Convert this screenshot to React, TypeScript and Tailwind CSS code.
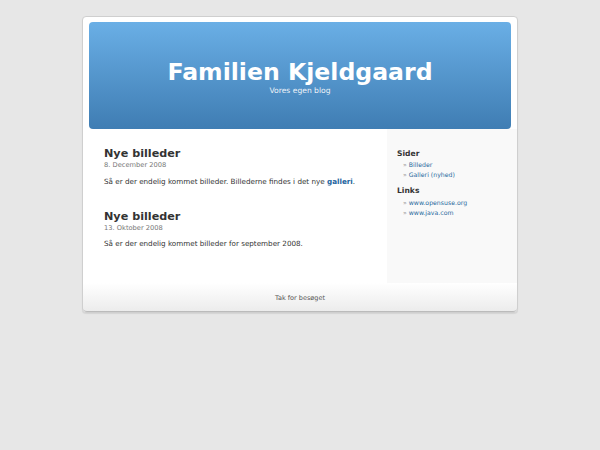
import React from "react";

export default function App() {
  return (
    <div className="min-h-[450px] w-full bg-[#e7e7e7] pt-[16px]" style={{ fontFamily: '"DejaVu Sans", Verdana, sans-serif' }}>
      <div className="mx-auto w-[436px] rounded-[4px] border border-[#cfcfcf] bg-white shadow-[0_1px_1px_rgba(0,0,0,0.08)]">
        <div className="px-[6px] pt-[5px]">
          <div className="flex h-[107px] flex-col items-center justify-center rounded-[4px] bg-gradient-to-b from-[#6aafe6] to-[#3f7db3]">
            <h1 className="mt-[3px] text-[23.6px] font-bold leading-[28px] text-white">Familien Kjeldgaard</h1>
            <div className="text-[7.6px] leading-[10px] text-[#eef3f8]">Vores egen blog</div>
          </div>
        </div>
        <div className="flex">
          <div className="flex-1 pl-[21px] pt-[18px]">
            <div>
              <h2 className="text-[11.2px] font-bold leading-[14px] text-[#333]">Nye billeder</h2>
              <div className="text-[6.7px] leading-[9px] text-[#777]">8. December 2008</div>
              <p className="mt-[7px] text-[7.2px] leading-[10px] text-[#333]">
                Så er der endelig kommet billeder. Billederne findes i det nye <a className="font-bold text-[#21639e]">galleri</a>.
              </p>
            </div>
            <div className="mt-[23px]">
              <h2 className="text-[11.2px] font-bold leading-[14px] text-[#333]">Nye billeder</h2>
              <div className="text-[6.7px] leading-[9px] text-[#777]">13. Oktober 2008</div>
              <p className="mt-[6px] text-[7.2px] leading-[10px] text-[#333]">Så er der endelig kommet billeder for september 2008.</p>
            </div>
          </div>
          <div className="h-[154px] w-[130px] bg-[#f9f9f9] pl-[10px] pt-[20px]">
            <h3 className="text-[7.6px] font-bold leading-[10px] text-[#333]">Sider</h3>
            <ul className="mt-[1px] pl-[6px] text-[6.2px] leading-[10px]">
              <li><span className="text-[#999]">» </span><span className="text-[#2a6a9e]">Billeder</span></li>
              <li><span className="text-[#999]">» </span><span className="text-[#2a6a9e]">Galleri (nyhed)</span></li>
            </ul>
            <h3 className="mt-[6px] text-[7.6px] font-bold leading-[10px] text-[#333]">Links</h3>
            <ul className="mt-[2px] pl-[6px] text-[6.2px] leading-[9.5px]">
              <li><span className="text-[#999]">» </span><span className="text-[#2a6a9e]">www.opensuse.org</span></li>
              <li><span className="text-[#999]">» </span><span className="text-[#2a6a9e]">www.java.com</span></li>
            </ul>
          </div>
        </div>
        <div className="flex h-[29px] items-center justify-center rounded-b-[4px] border-b border-[#bbb] bg-gradient-to-b from-white to-[#ececec] pt-[3px] text-[6.5px] text-[#555]">
          Tak for besøget
        </div>
      </div>
    </div>
  );
}
